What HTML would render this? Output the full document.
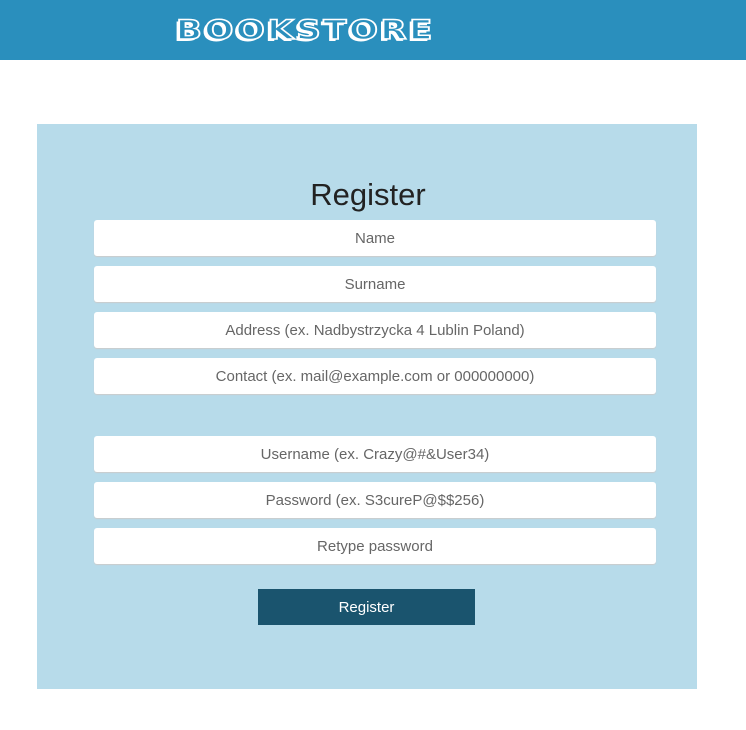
<!DOCTYPE html>
<html><head><style>
body{margin:0;width:746px;height:730px;background:#fff;font-family:"Liberation Sans",sans-serif;position:relative;overflow:hidden}
.hdr{position:absolute;left:0;top:0;width:746px;height:60px;background:#2a8fbd}
.logo{position:absolute;left:176px;top:15px;font:900 27px "DejaVu Sans",sans-serif;letter-spacing:2px;color:#2a8fbd;-webkit-text-stroke:1.5px #fff;text-shadow:-2px 2px 0 #fff;white-space:nowrap;transform:scaleX(1.26);transform-origin:left}
.panel{position:absolute;left:37px;top:124px;width:660px;height:565px;background:#b7dbea}
h1{position:absolute;left:-12px;width:760px;top:177px;margin:0;text-align:center;font-weight:normal;font-size:31px;color:#222}
.in{position:absolute;left:94px;width:562px;height:36px;background:#fff;border-radius:3px;box-shadow:0 1px 1px #ccc;text-align:center;line-height:38px;font-size:15px;color:#666}
.btn{position:absolute;left:258px;top:589px;width:217px;height:36px;background:#1a546e;color:#fff;text-align:center;line-height:38px;font-size:15px}
</style></head><body>
<div class="hdr"><div class="logo">BOOKSTORE</div></div>
<div class="panel"></div>
<h1>Register</h1>
<div class="in" style="top:220px">Name</div>
<div class="in" style="top:266px">Surname</div>
<div class="in" style="top:312px">Address (ex. Nadbystrzycka 4 Lublin Poland)</div>
<div class="in" style="top:358px">Contact (ex. mail@example.com or 000000000)</div>
<div class="in" style="top:436px">Username (ex. Crazy@#&amp;User34)</div>
<div class="in" style="top:482px">Password (ex. S3cureP@$$256)</div>
<div class="in" style="top:528px">Retype password</div>
<div class="btn">Register</div>
</body></html>
